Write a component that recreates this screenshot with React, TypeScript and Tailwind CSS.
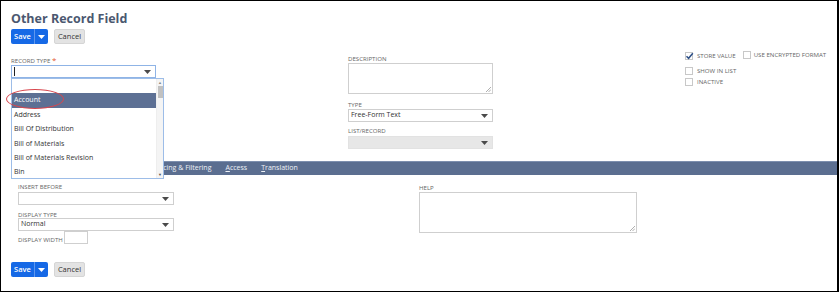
import React from "react";

const ROWS = [
  "",
  "Account",
  "Address",
  "Bill Of Distribution",
  "Bill of Materials",
  "Bill of Materials Revision",
  "Bin",
];

function Caret({ color = "#4a4a4a" }: { color?: string }) {
  return (
    <svg width="7" height="4" viewBox="0 0 7 4" className="shrink-0">
      <polygon points="0,0 7,0 3.5,4" fill={color} />
    </svg>
  );
}

function Grip() {
  return (
    <svg width="6" height="6" viewBox="0 0 6 6" className="absolute right-[1px] bottom-[1px]">
      <path d="M6 1 L1 6 M6 3.5 L3.5 6" stroke="#9a9a9a" strokeWidth="0.8" />
    </svg>
  );
}

function Label({ children, className = "" }: { children: React.ReactNode; className?: string }) {
  return (
    <div className={`text-[6.1px] leading-[8px] uppercase text-[#666666] ${className}`}>
      {children}
    </div>
  );
}

function Select({ value = "", disabled = false, w }: { value?: string; disabled?: boolean; w: string }) {
  return (
    <div
      className={`${w} h-[13px] border flex items-center justify-between pl-[2px] pr-[4px] text-[7px] text-[#333] ${
        disabled ? "bg-[#e7e7e7] border-[#e2e2e2]" : "bg-white border-[#cfcfcf]"
      }`}
    >
      <span>{value}</span>
      <Caret />
    </div>
  );
}

function Check({ checked = false }: { checked?: boolean }) {
  return (
    <div className="w-[8px] h-[8px] border border-[#c8c8c8] bg-white relative shrink-0">
      {checked && (
        <svg width="9" height="8" viewBox="0 0 9 8" className="absolute -left-[1px] -top-[1px]">
          <path d="M1.5 4.2 L3.6 6.3 L7.8 1.2" stroke="#2d4f86" strokeWidth="1.5" fill="none" />
        </svg>
      )}
    </div>
  );
}

function Buttons() {
  return (
    <div className="flex items-center pl-[10px] h-[15px]">
      <div className="flex h-[15px] rounded-[2px] bg-[#1669e6] text-white text-[7.5px] font-semibold">
        <div className="w-[24px] flex items-center justify-center border-r border-[#5f97ee]">Save</div>
        <div className="w-[13px] flex items-center justify-center">
          <Caret color="#ffffff" />
        </div>
      </div>
      <div className="ml-[6px] w-[31px] h-[15px] rounded-[2px] bg-[#e3e3e3] border border-[#d5d5d5] text-[7.5px] text-[#333] flex items-center justify-center">
        Cancel
      </div>
    </div>
  );
}

export default function App() {
  return (
    <div className="w-[840px] h-[293px] bg-white font-['Open_Sans',sans-serif]">
      <div className="w-[839px] h-[292px] border border-r-2 border-black flex flex-col">
        {/* Title */}
        <h1 className="pl-[10px] pt-[9px] h-[28px] text-[12.5px] leading-[18px] font-bold text-[#4b5870]">
          Other Record Field
        </h1>
        <Buttons />

        {/* Main fields */}
        <div className="h-[117px] flex">
          <div className="ml-[10px] w-[145px] pt-[12px]">
            <Label>
              Record Type <span className="text-[#e4572e] text-[8px]">*</span>
            </Label>
            <div className="relative">
              <div className="h-[13px] border border-[#8fb4e6] bg-white flex items-center justify-between pl-[2px] pr-[4px]">
                <div className="w-[1px] h-[9px] bg-[#222]" />
                <Caret />
              </div>
              {/* dropdown list */}
              <div className="absolute left-0 top-[13px] w-[153px] h-[101px] border border-[#9dbde8] bg-white z-10 flex">
                <div className="flex-1 flex flex-col">
                  {ROWS.map((r) => (
                    <div
                      key={r || "empty"}
                      className={`h-[14.4px] shrink-0 flex items-center pl-[2px] text-[7px] ${
                        r === "Account" ? "bg-[#5d7094] text-white" : "text-[#333]"
                      }`}
                    >
                      {r}
                    </div>
                  ))}
                </div>
                <div className="w-[7px] border-l border-[#eeeeee] flex flex-col items-center bg-[#f4f4f4]">
                  <span className="text-[4px] leading-[7px] text-[#888]">▲</span>
                  <div className="w-[5px] h-[12px] bg-[#c1c1c1]" />
                  <div className="flex-1" />
                  <span className="text-[4px] leading-[7px] text-[#555]">▼</span>
                </div>
                {/* red highlight ellipse */}
                <div className="absolute left-[-6px] top-[10px] w-[58px] h-[20px] rounded-[50%] border-[1.5px] border-[#d8464d]" />
              </div>
            </div>
          </div>

          <div className="ml-[192px] w-[145px] pt-[11px]">
            <Label>Description</Label>
            <div className="relative h-[31px] border border-[#cfcfcf] bg-white">
              <Grip />
            </div>
            <Label className="mt-[7px]">Type</Label>
            <Select w="w-[145px]" value="Free-Form Text" />
            <Label className="mt-[5px]">List/Record</Label>
            <div className="mt-[1px]">
              <Select w="w-[145px]" disabled />
            </div>
          </div>

          <div className="ml-[192px] pt-[8px] text-[6.1px] uppercase text-[#666666]">
            <div className="flex items-center h-[8px]">
              <Check checked />
              <span className="ml-[4px]">Store Value</span>
              <div className="ml-[7px] flex items-center -mt-[2px]">
                <Check />
                <span className="ml-[3px]">Use Encrypted Format</span>
              </div>
            </div>
            <div className="flex items-center h-[8px] mt-[7px]">
              <Check />
              <span className="ml-[4px]">Show in List</span>
            </div>
            <div className="flex items-center h-[8px] mt-[3px]">
              <Check />
              <span className="ml-[4px]">Inactive</span>
            </div>
          </div>
        </div>

        {/* Tab bar */}
        <div className="ml-[10px] h-[14px] bg-[#5b6e90] border-t border-[#7d8fae] flex items-center pl-[12px] gap-[14px] text-[7px] font-medium text-[#eef1f6]">
          <div className="w-[111px] flex gap-[14px] whitespace-nowrap">
            <span>Applies To</span>
            <span>Display</span>
          </div>
          <span>
            <span className="underline">S</span>ourcing &amp; Filtering
          </span>
          <span>
            <span className="underline">A</span>ccess
          </span>
          <span>
            <span className="underline">T</span>ranslation
          </span>
        </div>

        {/* Sub-tab fields */}
        <div className="flex pl-[17px]">
          <div className="w-[156px] pt-[8px]">
            <Label>Insert Before</Label>
            <div className="mt-[1px]">
              <Select w="w-[156px]" />
            </div>
            <Label className="mt-[6px]">Display Type</Label>
            <div className="mt-[-1px]">
              <Select w="w-[156px]" value="Normal" />
            </div>
            <div className="flex items-end">
              <Label>Display Width</Label>
              <div className="ml-[1px] w-[24px] h-[13px] border border-[#cfcfcf] bg-white" />
            </div>
          </div>
          <div className="ml-[245px] pt-[9px]">
            <Label>Help</Label>
            <div className="relative w-[218px] h-[41px] border border-[#cfcfcf] bg-white">
              <Grip />
            </div>
          </div>
        </div>

        <div className="mt-[18px]">
          <Buttons />
        </div>
      </div>
    </div>
  );
}
